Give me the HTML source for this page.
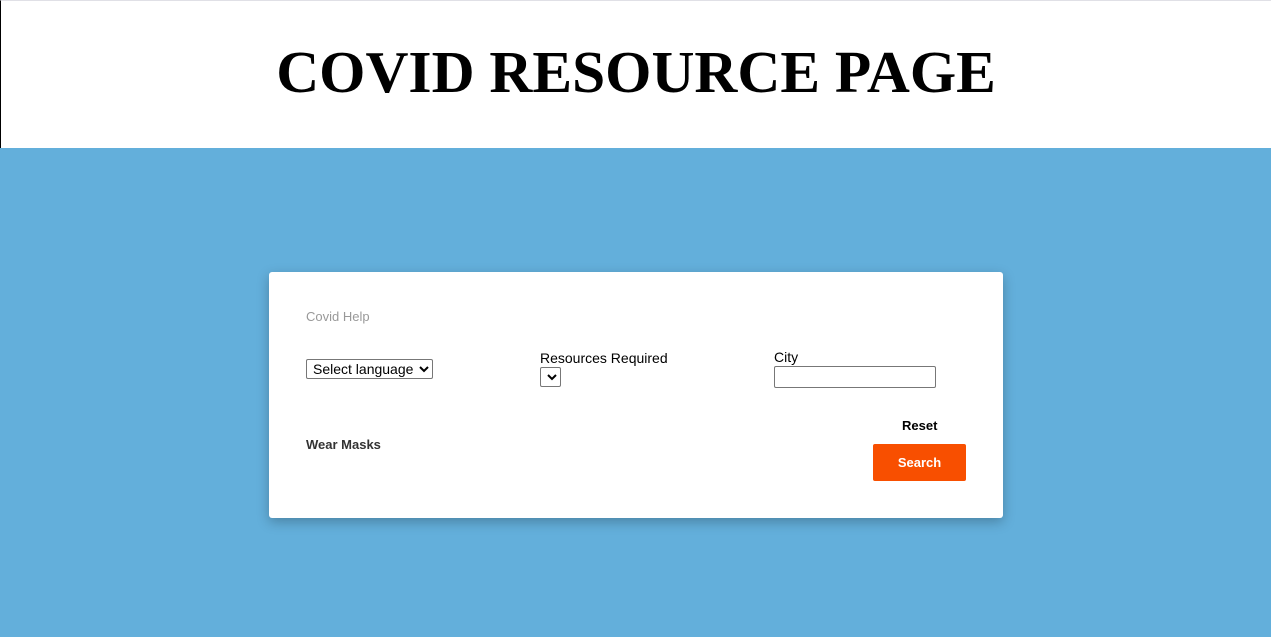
<!DOCTYPE html>
<html><head><style>
html,body{margin:0;padding:0}
body{width:1271px;height:637px;overflow:hidden;background:#63afdb;font-family:"Liberation Sans",Arial,sans-serif;position:relative}
.head{position:absolute;left:0;top:0;width:1271px;height:148px;background:#fff;border-left:1px solid #000;border-top:1px solid #e0e0e6;box-sizing:border-box}
.head h1{margin:0;position:absolute;left:0;right:0;top:36px;text-align:center;font-family:"Liberation Serif",serif;font-weight:bold;font-size:59.5px;line-height:70px;color:#000}
.card{position:absolute;left:269px;top:272px;width:734px;height:246px;background:#fff;border-radius:3px;box-shadow:0 4px 12px rgba(0,0,0,.25)}
.a{position:absolute;font-size:14px;color:#000}
select,input{font-family:"Liberation Sans",Arial,sans-serif;font-size:14px;position:absolute;box-sizing:border-box;background:#fff;border:1px solid #777;border-radius:2px;margin:0;padding:0 2px}
.btn{position:absolute;left:604px;top:172px;width:93px;height:37px;background:#f84f00;color:#fff;font-weight:bold;font-size:13px;text-align:center;line-height:37px;border-radius:2px}
</style></head><body>
<div class="head"><h1>COVID RESOURCE PAGE</h1></div>
<div class="card">
<div class="a" style="left:37px;top:37px;color:#999;font-size:13px">Covid Help</div>
<select style="left:37px;top:87px;width:127px;height:20px"><option>Select language</option></select>
<div class="a" style="left:271px;top:78px">Resources Required</div>
<select style="left:271px;top:95px;width:21px;height:20px"><option></option></select>
<div class="a" style="left:505px;top:77px">City</div>
<input style="left:505px;top:94px;width:162px;height:22px">
<div class="a" style="left:633px;top:146px;font-weight:bold;font-size:13px">Reset</div>
<div class="a" style="left:37px;top:165px;font-weight:bold;font-size:13px;color:#333">Wear Masks</div>
<div class="btn">Search</div>
</div>
</body></html>
